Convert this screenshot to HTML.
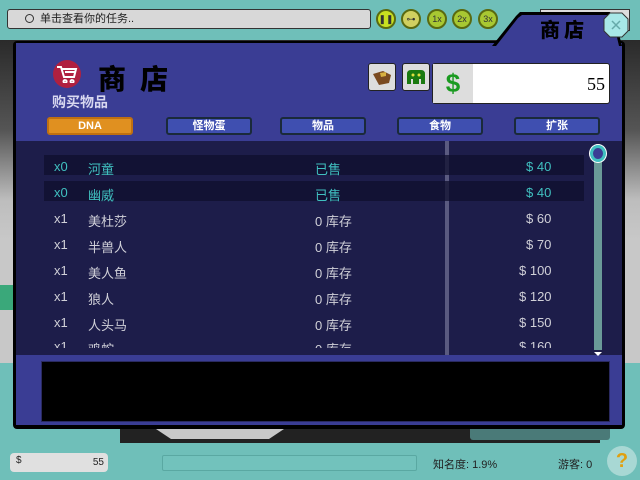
<!DOCTYPE html>
<html><head><meta charset="utf-8"><style>
*{margin:0;padding:0;box-sizing:border-box}
body{width:640px;height:480px;overflow:hidden;position:relative;background:#6fbfb9;font-family:"Liberation Sans","Noto Sans CJK SC",sans-serif}
.a{position:absolute}
.cn{font-family:"Liberation Sans","Noto Sans CJK SC",sans-serif}
.tab{position:absolute;top:117px;height:18px;background:#3f4fb0;border:2px solid #1a2a3a;border-radius:3px;color:#fff;font-size:11px;font-weight:bold;text-align:center;line-height:14px}
.row{position:absolute;left:44px;width:540px;height:20px;font-size:13px;color:#d0d0d8}
.row span{position:absolute;top:2px}
.circ{position:absolute;top:9px;width:20px;height:20px;border-radius:50%;background:#a8c832;border:2px solid #5a6a10;font-size:9px;text-align:center;line-height:16px;color:#333}
</style></head><body>
<!-- scenery -->
<div class="a" style="left:0;top:40px;width:640px;height:200px;background:linear-gradient(180deg,#2a2a2a 0%,#555 45%,#bdbdbd 80%,#c8c8c8 100%)"></div>
<div class="a" style="left:0;top:240px;width:640px;height:125px;background:#c8c8c8"></div>
<div class="a" style="left:0;top:285px;width:14px;height:25px;background:#3aa87a"></div>
<div class="a" style="left:0;top:363px;width:640px;height:117px;background:#6fbfb9"></div>
<div class="a" style="left:120px;top:425px;width:480px;height:18px;background:#222"></div>
<div class="a" style="left:150px;top:425px;width:140px;height:14px;background:#c8c8c8;clip-path:polygon(0 0,100% 0,85% 100%,15% 100%)"></div>
<div class="a" style="left:470px;top:425px;width:140px;height:15px;background:#4a7a78;border-radius:3px"></div>
<!-- top bar -->
<div class="a" style="left:0;top:0;width:640px;height:36px;background:#6fbfb9"></div>
<div class="a" style="left:7px;top:9px;width:364px;height:20px;background:#d8d8d8;border:1px solid #333;border-radius:3px;font-size:11px;line-height:18px;padding-left:32px;color:#222">单击查看你的任务..</div>
<div class="a" style="left:25px;top:14px;width:9px;height:9px;border:1px solid #333;border-radius:50%"></div>
<div class="circ" style="left:376px;background:#c8e020">❚❚</div>
<div class="circ" style="left:401px;background:#d0d060">⊶</div>
<div class="circ" style="left:427px">1x</div>
<div class="circ" style="left:452px">2x</div>
<div class="circ" style="left:478px">3x</div>
<div class="a" style="left:540px;top:9px;width:90px;height:22px;background:#ddd;border:1px solid #333"></div>
<!-- panel -->
<div class="a" style="left:13px;top:41px;width:612px;height:388px;background:#000;border-radius:4px"></div>
<div class="a" style="left:16px;top:43px;width:606px;height:382px;background:#3a3d94"></div>
<!-- tab -->
<svg class="a" style="left:490px;top:12px" width="140" height="34"><polygon points="2,34 26,4 30,0 120,0 125,6 132,34" fill="#000"/><polygon points="6,34 28,6 32,3 118,3 123,8 129,34" fill="#3a3d94"/></svg>
<div class="a cn" style="left:540px;top:14px;font-size:20px;font-weight:900;color:#000;letter-spacing:4px">商店</div>
<svg class="a" style="left:603px;top:12px" width="26" height="26"><polygon points="7,1 19,1 25,7 25,19 19,25 7,25 1,19 1,7" fill="#a8e8e8" stroke="#333"/><path d="M9 9L17 17M17 9L9 17" stroke="#6aa" stroke-width="1.5"/></svg>
<!-- header -->
<div class="a" style="left:53px;top:60px;width:28px;height:28px;border-radius:50%;background:#b02040"></div>
<svg class="a" style="left:56px;top:65px" width="22" height="18"><path d="M1 2H5L8 12H18L20 4H6M9 7H19M9 15a1.5 1.5 0 1 0 .1 0M16 15a1.5 1.5 0 1 0 .1 0" stroke="#fff" stroke-width="2" fill="none"/></svg>
<div class="a cn" style="left:98px;top:58px;font-size:28px;font-weight:900;color:#000;letter-spacing:14px">商店</div>
<div class="a cn" style="left:52px;top:92px;font-size:14px;font-weight:bold;color:#d8d8f0">购买物品</div>
<div class="a" style="left:368px;top:63px;width:28px;height:28px;background:#ddd;border:1px solid #222;border-radius:3px"></div>
<svg class="a" style="left:371px;top:67px" width="22" height="20"><path d="M2 7L12 4L20 8L18 16L8 18Z" fill="#7a4a20"/><path d="M9 6L15 5L15 9L10 10Z" fill="#d8b040"/></svg>
<div class="a" style="left:402px;top:63px;width:28px;height:28px;background:#ddd;border:1px solid #222;border-radius:3px"></div>
<svg class="a" style="left:405px;top:68px" width="22" height="18"><path d="M2 16V6Q2 2 6 2H16Q20 2 20 6V16H16V11H14V16H8V11H6V16Z" fill="#1a7a10"/><circle cx="8" cy="7" r="1.5" fill="#e0e040"/><circle cx="14" cy="7" r="1.5" fill="#e0e040"/></svg>
<div class="a" style="left:432px;top:63px;width:178px;height:41px;background:#fff;border:1px solid #222;border-radius:3px"></div>
<div class="a" style="left:433px;top:64px;width:40px;height:39px;background:#ddd;color:#1a9a20;font-size:26px;font-weight:900;text-align:center;line-height:39px">$</div>
<div class="a" style="left:560px;top:74px;font-family:'Liberation Serif',serif;font-size:18px;color:#000;width:45px;text-align:right">55</div>
<!-- tabs -->
<div class="tab cn" style="left:166px;width:86px">怪物蛋</div>
<div class="tab cn" style="left:280px;width:86px">物品</div>
<div class="tab cn" style="left:397px;width:86px">食物</div>
<div class="tab cn" style="left:514px;width:86px">扩张</div>
<div class="tab" style="left:47px;width:86px;background:#e09020;border-color:#c07010">DNA</div>
<!-- list -->
<div class="a" style="left:16px;top:141px;width:606px;height:214px;background:#1d1d4a;overflow:hidden">
<div class="a" style="left:429px;top:0;width:4px;height:214px;background:#5a5a80"></div>
<div class="a" style="left:28px;top:14px;width:540px;height:20px;background:rgba(15,15,45,0.75)"></div>
<div class="a" style="left:28px;top:40px;width:540px;height:20px;background:rgba(15,15,45,0.75)"></div>
</div>
<div class="row cn" style="top:157px;color:#40c0c0"><span style="left:10px">x0</span><span style="left:44px">河童</span><span style="left:271px">已售</span><span style="left:482px">$ 40</span></div>
<div class="row cn" style="top:183px;color:#40c0c0"><span style="left:10px">x0</span><span style="left:44px">幽威</span><span style="left:271px">已售</span><span style="left:482px">$ 40</span></div>
<div class="row cn" style="top:209px"><span style="left:10px">x1</span><span style="left:44px">美杜莎</span><span style="left:271px">0 库存</span><span style="left:482px">$ 60</span></div>
<div class="row cn" style="top:235px"><span style="left:10px">x1</span><span style="left:44px">半兽人</span><span style="left:271px">0 库存</span><span style="left:482px">$ 70</span></div>
<div class="row cn" style="top:261px"><span style="left:10px">x1</span><span style="left:44px">美人鱼</span><span style="left:271px">0 库存</span><span style="left:475px">$ 100</span></div>
<div class="row cn" style="top:287px"><span style="left:10px">x1</span><span style="left:44px">狼人</span><span style="left:271px">0 库存</span><span style="left:475px">$ 120</span></div>
<div class="row cn" style="top:313px"><span style="left:10px">x1</span><span style="left:44px">人头马</span><span style="left:271px">0 库存</span><span style="left:475px">$ 150</span></div>
<div class="a" style="left:16px;top:339px;width:606px;height:9px;overflow:hidden"><div class="row cn" style="left:28px;top:0"><span style="left:10px;top:0">x1</span><span style="left:44px;top:0">鸡蛇</span><span style="left:271px;top:0">0 库存</span><span style="left:475px;top:0">$ 160</span></div></div>
<!-- scrollbar -->
<div class="a" style="left:594px;top:150px;width:8px;height:200px;background:#6a9a98"></div>
<div class="a" style="left:590px;top:145px;width:16px;height:17px;border-radius:50%;background:#3a3d94;border:3px solid #40c0c0;box-shadow:0 0 0 1px #fff"></div>
<div class="a" style="left:594px;top:352px;width:0;height:0;border-left:4px solid transparent;border-right:4px solid transparent;border-top:4px solid #fff"></div>
<!-- black box -->
<div class="a" style="left:41px;top:361px;width:569px;height:61px;background:#000;border:1px solid #2a2a60"></div>
<!-- bottom bar -->
<div class="a" style="left:10px;top:453px;width:98px;height:19px;background:#e0e0e0;border-radius:4px;font-size:10px;color:#222"><span class="a" style="left:6px;top:2px">$</span><span class="a" style="right:4px;top:4px">55</span></div>
<div class="a" style="left:162px;top:455px;width:255px;height:16px;border:1px solid #5aa8a2;border-radius:2px;background:#72c2bc"></div>
<div class="a cn" style="left:433px;top:456px;font-size:11px;color:#222">知名度: 1.9%</div>
<div class="a cn" style="left:558px;top:456px;font-size:11px;color:#222">游客: 0</div>
<div class="a" style="left:607px;top:446px;width:30px;height:30px;border-radius:50%;background:#a8d8d4;color:#e0a010;font-size:20px;font-weight:900;text-align:center;line-height:30px">?</div>
</body></html>
